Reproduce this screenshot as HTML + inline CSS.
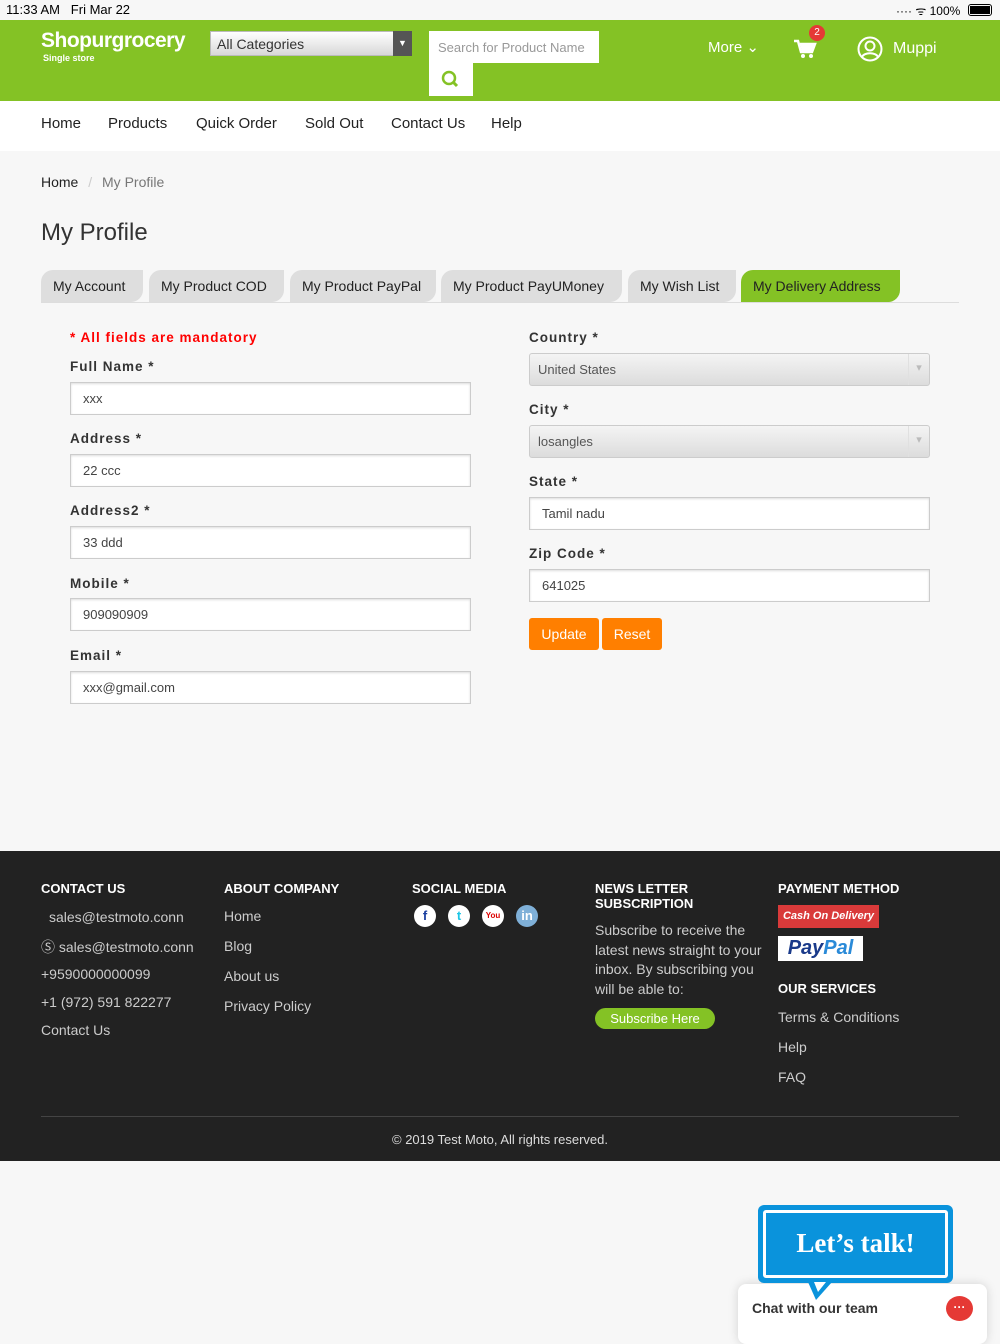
<!DOCTYPE html>
<html><head><meta charset="utf-8"><style>
*{box-sizing:border-box;margin:0;padding:0}
body{width:1000px;height:1334px;background:#f7f7f7;font-family:"Liberation Sans",sans-serif;color:#333;position:relative;overflow:hidden}
.abs{position:absolute}
.status{top:0;left:0;width:1000px;height:20px;background:#f7f7f7;font-size:13px;color:#000}
.hdr{top:20px;left:0;width:1000px;height:81px;background:#84c225}
.nav{top:101px;left:0;width:1000px;height:50px;background:#fff}
.nav span{position:absolute;top:14px;font-size:15px;color:#222}
.tab{position:absolute;top:270px;height:32px;background:#dedede;border-radius:12px 0 12px 0;font-size:14px;color:#222;padding:8px 12px 0;white-space:nowrap}
.lbl{position:absolute;font-size:13.5px;font-weight:bold;letter-spacing:1px;color:#333}
.inp{position:absolute;width:401px;height:33px;background:#fff;border:1px solid #ccc;box-shadow:inset 0 1px 2px #ddd;font-size:13px;color:#444;padding:8px 12px}
.sel{position:absolute;left:529px;width:401px;height:33px;border:1px solid #ccc;border-radius:3px;background:linear-gradient(#f4f4f4,#dcdcdc);font-size:13px;color:#555;padding:8px 8px}
.sel:after{content:"▾";position:absolute;right:0;top:0;width:20px;height:31px;border-left:1px solid #e0e0e0;color:#bbb;font-size:11px;text-align:center;line-height:28px}
.btn{position:absolute;top:618px;height:32px;background:#ff7f00;color:#fff;font-size:14px;border-radius:3px;padding-top:8px;text-align:center}
.foot{top:851px;left:0;width:1000px;height:310px;background:#222;color:#ddd}
.fh{position:absolute;font-size:13px;font-weight:bold;color:#fff;top:30px}
.fl{position:absolute;font-size:14px;color:#ccc}
.ic{position:absolute;top:54px;width:22px;height:22px;border-radius:50%;background:#fff;font-size:13px;font-weight:bold;text-align:center;line-height:22px}
</style></head><body>
<div class="abs status"><span class="abs" style="left:6px;top:2px">11:33 AM&nbsp;&nbsp; Fri Mar 22</span><span class="abs" style="left:896px;top:2px;font-size:12px">···· ᯤ 100%</span><div class="abs" style="left:968px;top:4px;width:24px;height:12px;border:1px solid #000;border-radius:3px;padding:1px"><div style="background:#000;width:100%;height:100%"></div></div></div>
<div class="abs hdr">
<div class="abs" style="left:41px;top:9px;color:#fff;font-size:21px;font-weight:bold;letter-spacing:-0.5px">Shopurgrocery</div>
<div class="abs" style="left:43px;top:33px;color:#fff;font-size:9px;font-weight:bold">Single store</div>
<div class="abs" style="left:210px;top:11px;width:202px;height:25px;background:linear-gradient(#fff,#d8d8d8);border:1px solid #bbb;font-size:14px;color:#333;padding:4px 6px">All Categories</div>
<div class="abs" style="left:393px;top:11px;width:19px;height:25px;background:#555;color:#fff;font-size:9px;text-align:center;line-height:25px">▼</div>
<div class="abs" style="left:429px;top:11px;width:170px;height:32px;background:#fff;font-size:13px;color:#999;padding:9px 9px;white-space:nowrap;overflow:hidden">Search for Product Name</div>
<div class="abs" style="left:429px;top:43px;width:44px;height:33px;background:#fff"><svg width="44" height="33"><circle cx="20" cy="15" r="6" fill="none" stroke="#84c225" stroke-width="2.5"/><line x1="24.5" y1="19.5" x2="28" y2="23" stroke="#84c225" stroke-width="3"/></svg></div>
<div class="abs" style="left:708px;top:18px;color:#fff;font-size:15px">More ⌄</div>
<svg class="abs" style="left:793px;top:18px" width="24" height="22"><path d="M1 3h4l3 11h11l3-8H7" fill="none" stroke="#fff" stroke-width="2.5"/><circle cx="10" cy="18" r="2" fill="#fff"/><circle cx="18" cy="18" r="2" fill="#fff"/><path d="M7 6h15l-3 8H9z" fill="#fff"/></svg>
<div class="abs" style="left:809px;top:5px;width:16px;height:16px;border-radius:50%;background:#e53935;color:#fff;font-size:10px;text-align:center;line-height:16px">2</div>
<svg class="abs" style="left:857px;top:16px" width="26" height="26"><circle cx="13" cy="13" r="11.5" fill="none" stroke="#fff" stroke-width="2"/><circle cx="13" cy="10" r="4.5" fill="none" stroke="#fff" stroke-width="2"/><path d="M5 21c2-5 14-5 16 0" fill="none" stroke="#fff" stroke-width="2"/></svg>
<div class="abs" style="left:893px;top:20px;color:#fff;font-size:16px">Muppi</div>
</div>
<div class="abs nav"><span style="left:41px">Home</span><span style="left:108px">Products</span><span style="left:196px">Quick Order</span><span style="left:305px">Sold Out</span><span style="left:391px">Contact Us</span><span style="left:491px">Help</span></div>
<div class="abs" style="left:41px;top:174px;font-size:14px;color:#222">Home <span style="color:#ccc;margin:0 6px">/</span> <span style="color:#777">My Profile</span></div>
<div class="abs" style="left:41px;top:219px;font-size:24px;color:#333">My Profile</div>
<div class="tab" style="left:41px;width:102px">My Account</div>
<div class="tab" style="left:149px;width:135px">My Product COD</div>
<div class="tab" style="left:290px;width:146px">My Product PayPal</div>
<div class="tab" style="left:441px;width:181px">My Product PayUMoney</div>
<div class="tab" style="left:628px;width:108px">My Wish List</div>
<div class="tab" style="left:741px;width:159px;background:#84c225">My Delivery Address</div>
<div class="abs" style="left:41px;top:302px;width:918px;height:1px;background:#ddd"></div>
<div class="lbl" style="left:70px;top:330px;color:#f00">* All fields are mandatory</div>
<div class="lbl" style="left:70px;top:359px">Full Name *</div><div class="inp" style="left:70px;top:382px">xxx</div>
<div class="lbl" style="left:70px;top:431px">Address *</div><div class="inp" style="left:70px;top:454px">22 ccc</div>
<div class="lbl" style="left:70px;top:503px">Address2 *</div><div class="inp" style="left:70px;top:526px">33 ddd</div>
<div class="lbl" style="left:70px;top:576px">Mobile *</div><div class="inp" style="left:70px;top:598px">909090909</div>
<div class="lbl" style="left:70px;top:648px">Email *</div><div class="inp" style="left:70px;top:671px">xxx@gmail.com</div>
<div class="lbl" style="left:529px;top:330px">Country *</div><div class="sel" style="top:353px">United States</div>
<div class="lbl" style="left:529px;top:402px">City *</div><div class="sel" style="top:425px">losangles</div>
<div class="lbl" style="left:529px;top:474px">State *</div><div class="inp" style="left:529px;top:497px">Tamil nadu</div>
<div class="lbl" style="left:529px;top:546px">Zip Code *</div><div class="inp" style="left:529px;top:569px">641025</div>
<div class="btn" style="left:529px;width:70px">Update</div><div class="btn" style="left:602px;width:60px">Reset</div>
<div class="abs foot">
<div class="fh" style="left:41px">CONTACT US</div>
<div class="fl" style="left:49px;top:58px">sales@testmoto.conn</div>
<div class="fl" style="left:41px;top:86px">Ⓢ sales@testmoto.conn</div>
<div class="fl" style="left:41px;top:115px">+9590000000099</div>
<div class="fl" style="left:41px;top:143px">+1 (972) 591 822277</div>
<div class="fl" style="left:41px;top:171px">Contact Us</div>
<div class="fh" style="left:224px">ABOUT COMPANY</div>
<div class="fl" style="left:224px;top:57px">Home</div>
<div class="fl" style="left:224px;top:87px">Blog</div>
<div class="fl" style="left:224px;top:117px">About us</div>
<div class="fl" style="left:224px;top:147px">Privacy Policy</div>
<div class="fh" style="left:412px">SOCIAL MEDIA</div>
<div class="ic" style="left:414px;color:#1a3fa0">f</div>
<div class="ic" style="left:448px;color:#1ec6e6">t</div>
<div class="ic" style="left:482px;color:#d00;font-size:8px">You</div>
<div class="ic" style="left:516px;background:#7fb0d8;color:#fff">in</div>
<div class="fh" style="left:595px;line-height:15px">NEWS LETTER<br>SUBSCRIPTION</div>
<div class="fl" style="left:595px;top:70px;width:175px;line-height:19.5px">Subscribe to receive the latest news straight to your inbox. By subscribing you will be able to:</div>
<div class="abs" style="left:595px;top:157px;width:120px;height:21px;border-radius:11px;background:#84c225;color:#fff;font-size:13px;text-align:center;line-height:21px">Subscribe Here</div>
<div class="fh" style="left:778px">PAYMENT METHOD</div>
<div class="abs" style="left:778px;top:54px;width:101px;height:23px;background:#d93a3a;color:#fff;font-size:11px;font-weight:bold;font-style:italic;text-align:center;line-height:23px">Cash On Delivery</div>
<div class="abs" style="left:778px;top:85px;width:85px;height:25px;background:#fff;color:#1a3a8a;font-size:20px;font-weight:bold;font-style:italic;text-align:center;line-height:25px">Pay<span style="color:#2a8ad8">Pal</span></div>
<div class="fh" style="left:778px;top:130px">OUR SERVICES</div>
<div class="fl" style="left:778px;top:158px">Terms &amp; Conditions</div>
<div class="fl" style="left:778px;top:188px">Help</div>
<div class="fl" style="left:778px;top:218px">FAQ</div>
<div class="abs" style="left:41px;top:265px;width:918px;height:1px;background:#444"></div>
<div class="abs" style="left:0;top:281px;width:1000px;text-align:center;font-size:13px;color:#ddd">© 2019 Test Moto, All rights reserved.</div>
</div>
<div class="abs" style="left:738px;top:1284px;width:249px;height:60px;background:#fff;border-radius:8px;box-shadow:0 0 10px rgba(0,0,0,.15)"></div>
<div class="abs" style="left:752px;top:1300px;font-size:14px;font-weight:bold;color:#333">Chat with our team</div>
<div class="abs" style="left:946px;top:1296px;width:27px;height:25px;border-radius:50%;background:#e53935;color:#fff;font-size:12px;text-align:center;line-height:22px;font-weight:bold">···</div>
<div class="abs" style="left:758px;top:1205px;width:195px;height:78px;background:#0a93dc;border-radius:6px;padding:5px"><div style="width:100%;height:100%;border:3px solid #fff;border-radius:3px;color:#fff;font-family:'Liberation Serif',serif;font-weight:bold;font-size:27px;text-align:center;line-height:60px">Let’s talk!</div></div>
<svg class="abs" style="left:806px;top:1282px" width="30" height="20"><path d="M2 0L10 18L26 0z" fill="#0a93dc"/><path d="M8 0L12 10L20 0z" fill="#fff"/></svg>
</body></html>
